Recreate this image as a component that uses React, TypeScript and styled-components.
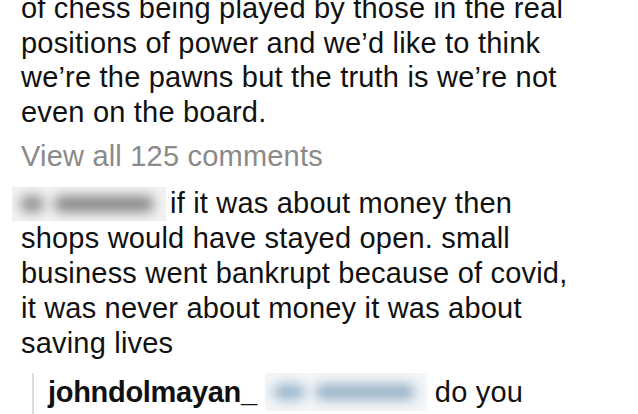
import styled, { createGlobalStyle } from "styled-components";

const GlobalStyle = createGlobalStyle`
  html, body {
    margin: 0;
    padding: 0;
    background: #ffffff;
    overflow: hidden;
  }
  body {
    font-family: "Liberation Sans", Arial, sans-serif;
    -webkit-font-smoothing: antialiased;
  }
`;

const Page = styled.div`
  width: 638px;
  height: 414px;
  overflow: hidden;
  padding: 0 0 0 21px;
  box-sizing: border-box;
  color: #111111;
  font-size: 29px;
  letter-spacing: 0.2px;
`;

const PostText = styled.div`
  margin-top: -9px;
  line-height: 34.5px;
`;

const Line = styled.div`
  white-space: nowrap;
`;

const ViewAll = styled.div`
  margin-top: 10px;
  line-height: 34px;
  color: #8a8a8a;
`;

const Comment = styled.div`
  margin-top: 13px;
  line-height: 35px;
`;

const FirstLine = styled.div`
  display: flex;
  align-items: center;
  white-space: nowrap;
  gap: 4px;
`;

const Blur = styled.span<{ $w: number; $h: number; $bg: string; $shift?: number }>`
  display: inline-flex;
  align-items: center;
  gap: 10px;
  width: ${(p) => p.$w}px;
  height: ${(p) => p.$h}px;
  margin-left: ${(p) => p.$shift ?? 0}px;
  padding: 0 8px;
  box-sizing: border-box;
  background: ${(p) => p.$bg};
  overflow: hidden;
  flex-shrink: 0;
`;

const Blob = styled.span<{ $w: number; $c: string }>`
  display: block;
  width: ${(p) => p.$w}px;
  height: 16px;
  border-radius: 8px;
  background: ${(p) => p.$c};
  filter: blur(6px);
`;

const Thread = styled.div`
  margin-top: 12px;
  margin-left: 11px;
  padding-left: 14px;
  border-left: 2px solid #dcdcdc;
  height: 60px;
`;

const ReplyRow = styled.div`
  display: flex;
  align-items: center;
  gap: 8px;
  white-space: nowrap;
  line-height: 38px;
`;

const Username = styled.span`
  font-weight: 700;
  letter-spacing: -0.3px;
`;

export default function App() {
  return (
    <>
      <GlobalStyle />
      <Page>
        <PostText>
          <Line>of chess being played by those in the real</Line>
          <Line>positions of power and we’d like to think</Line>
          <Line>we’re the pawns but the truth is we’re not</Line>
          <Line>even on the board.</Line>
        </PostText>
        <ViewAll>View all 125 comments</ViewAll>
        <Comment>
          <FirstLine>
            <Blur $w={154} $h={34} $bg="#f1f1f1" $shift={-9}>
              <Blob $w={24} $c="#8f8f8f" />
              <Blob $w={100} $c="#888888" />
            </Blur>
            <span>if it was about money then</span>
          </FirstLine>
          <Line>shops would have stayed open. small</Line>
          <Line>business went bankrupt because of covid,</Line>
          <Line>it was never about money it was about</Line>
          <Line>saving lives</Line>
        </Comment>
        <Thread>
          <ReplyRow>
            <Username>johndolmayan_</Username>
            <Blur $w={162} $h={38} $bg="#f3f6f8">
              <Blob $w={32} $c="#9cb6cb" />
              <Blob $w={100} $c="#98b2c7" />
            </Blur>
            <span>do you</span>
          </ReplyRow>
        </Thread>
      </Page>
    </>
  );
}
